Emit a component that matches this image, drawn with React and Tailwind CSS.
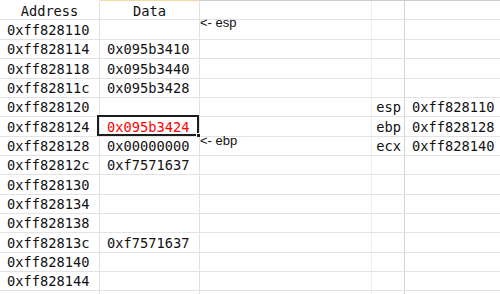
import React from "react";

const ROWS = [
  { addr: "0xff828110", data: "", h: "h-[20px]" },
  { addr: "0xff828114", data: "0x095b3410", h: "h-[19px]" },
  { addr: "0xff828118", data: "0x095b3440", h: "h-[20px]" },
  { addr: "0xff82811c", data: "0x095b3428", h: "h-[19px]" },
  { addr: "0xff828120", data: "", h: "h-[19px]", reg: "esp", val: "0xff828110" },
  { addr: "0xff828124", data: "0x095b3424", h: "h-[20px]", reg: "ebp", val: "0xff828128", selected: true },
  { addr: "0xff828128", data: "0x00000000", h: "h-[19px]", reg: "ecx", val: "0xff828140" },
  { addr: "0xff82812c", data: "0xf7571637", h: "h-[19px]" },
  { addr: "0xff828130", data: "", h: "h-[20px]" },
  { addr: "0xff828134", data: "", h: "h-[19px]" },
  { addr: "0xff828138", data: "", h: "h-[19px]" },
  { addr: "0xff82813c", data: "0xf7571637", h: "h-[20px]" },
  { addr: "0xff828140", data: "", h: "h-[19px]" },
  { addr: "0xff828144", data: "", h: "h-[19px]" },
  { addr: "", data: "", h: "h-[20px]" },
];

const mono = "font-['DejaVu_Sans_Mono',monospace] text-[13.7px] text-[#111]";

function Row({ row }) {
  return (
    <div className={`flex ${row.h} border-b border-[#e3e3e3]`}>
      <div className="w-[100px] shrink-0 flex items-center pl-[7px] pt-[1px] border-r border-[#e1e1e1]">
        {row.addr}
      </div>
      <div className="relative w-[100px] shrink-0 flex items-center pl-[7px] pt-[1px] border-r border-[#e1e1e1]">
        <span className={row.selected ? "text-[#ff0000]" : ""}>{row.data}</span>
        {row.selected && (
          <div className="absolute -left-[3px] -top-[2px] right-0 bottom-0 border-2 border-[#1c1c1c]">
            <div className="absolute -right-[4px] -bottom-[4px] w-[5px] h-[5px] bg-[#1c1c1c] border border-white" />
          </div>
        )}
      </div>
      <div className="w-[172px] shrink-0 border-r border-[#eeeeee]" />
      <div className="w-[33px] shrink-0 flex items-center justify-end pr-[3px] pt-[1px] border-r border-[#d2d2d2]">
        {row.reg}
      </div>
      <div className="flex-1 flex items-center pl-[7px] pt-[1px]">{row.val}</div>
    </div>
  );
}

export default function App() {
  return (
    <div className={`relative w-[500px] h-[294px] overflow-hidden bg-white ${mono}`}>
      <div className="flex h-[1px]">
        <div className="w-[100px]" />
        <div className="w-[100px] bg-[#f1d9a6]" />
        <div className="flex-1 bg-[#c9cdd1]" />
      </div>
      <div className="flex h-[19px] border-b border-[#e3e3e3]">
        <div className="w-[100px] shrink-0 flex items-center justify-center pt-[2px] border-r border-[#e1e1e1]">
          Address
        </div>
        <div className="w-[100px] shrink-0 flex items-center justify-center pt-[2px] border-r border-[#e1e1e1]">
          Data
        </div>
        <div className="w-[172px] shrink-0 border-r border-[#eeeeee]" />
        <div className="w-[33px] shrink-0 border-r border-[#d2d2d2]" />
        <div className="flex-1" />
      </div>
      {ROWS.map((row, i) => (
        <Row key={i} row={row} />
      ))}

      <div className="absolute left-[200px] top-[16px] font-['Liberation_Sans',sans-serif] text-[13px] leading-none text-[#111]">
        &lt;- esp
      </div>
      <div className="absolute left-[200px] top-[134px] font-['Liberation_Sans',sans-serif] text-[13px] leading-none text-[#111]">
        &lt;- ebp
      </div>
    </div>
  );
}
